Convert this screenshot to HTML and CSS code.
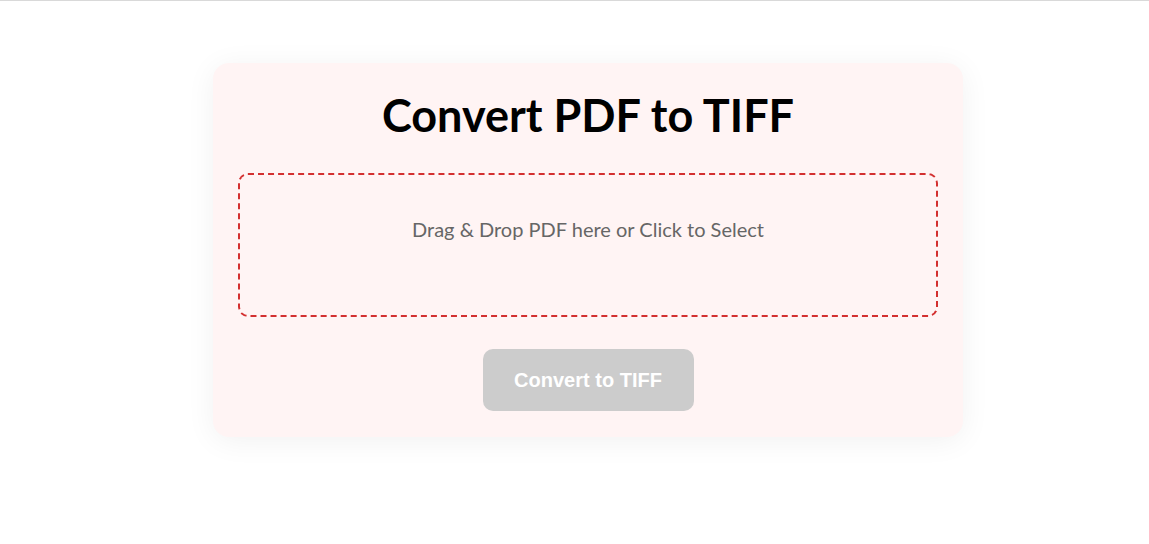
FILE: index.html
```html
<!DOCTYPE html>
<html lang="en">
<head>
    <meta charset="UTF-8">
    <meta name="viewport" content="width=device-width, initial-scale=1.0">
    <title>Convert PDF to TIFF</title>
    <link rel="stylesheet" href="styles.css">
</head>
<body>
    <div class="page">
        <div class="converter-card">
            <h1 class="converter-title">Convert PDF to TIFF</h1>

            <label for="pdfInput" class="drop-zone" id="dropZone">
                <span class="drop-text">Drag &amp; Drop PDF here or Click to Select</span>
                <input type="file" id="pdfInput" accept="application/pdf" hidden>
            </label>

            <button type="button" id="convertButton" class="convert-button" disabled>Convert to TIFF</button>
        </div>
    </div>
</body>
</html>
```

FILE: styles.css
```css
body {
    font-family: 'Lato', 'Liberation Sans', sans-serif;
    background-color: #ffffff;
    margin: 0;
    padding: 0;
    border-top: 1px solid #d9d9d9;
}

.page {
    padding: 62px 0 40px 213px;
}

.converter-card {
    width: 700px;
    padding: 25px 25px 26px;
    background-color: #fff4f4;
    border-radius: 16px;
    box-shadow: 0 4px 30px rgba(0, 0, 0, 0.06);
    text-align: center;
}

.converter-title {
    margin: 0 0 31px;
    font-size: 45px;
    font-weight: 700;
    line-height: 1.2;
    color: #000;
}

.drop-zone {
    display: block;
    box-sizing: border-box;
    height: 144px;
    padding-top: 42px;
    border: 2px dashed #d32f2f;
    border-radius: 10px;
    cursor: pointer;
}

.drop-text {
    font-size: 20px;
    color: #666;
}

.convert-button {
    display: block;
    box-sizing: border-box;
    margin: 32px auto 0;
    padding: 0;
    height: 62px;
    width: 211px;
    background-color: #cccccc;
    color: white;
    border: none;
    border-radius: 10px;
    font-family: 'Liberation Sans', Arial, sans-serif;
    font-size: 20px;
    font-weight: bold;
    cursor: not-allowed;
}
```
